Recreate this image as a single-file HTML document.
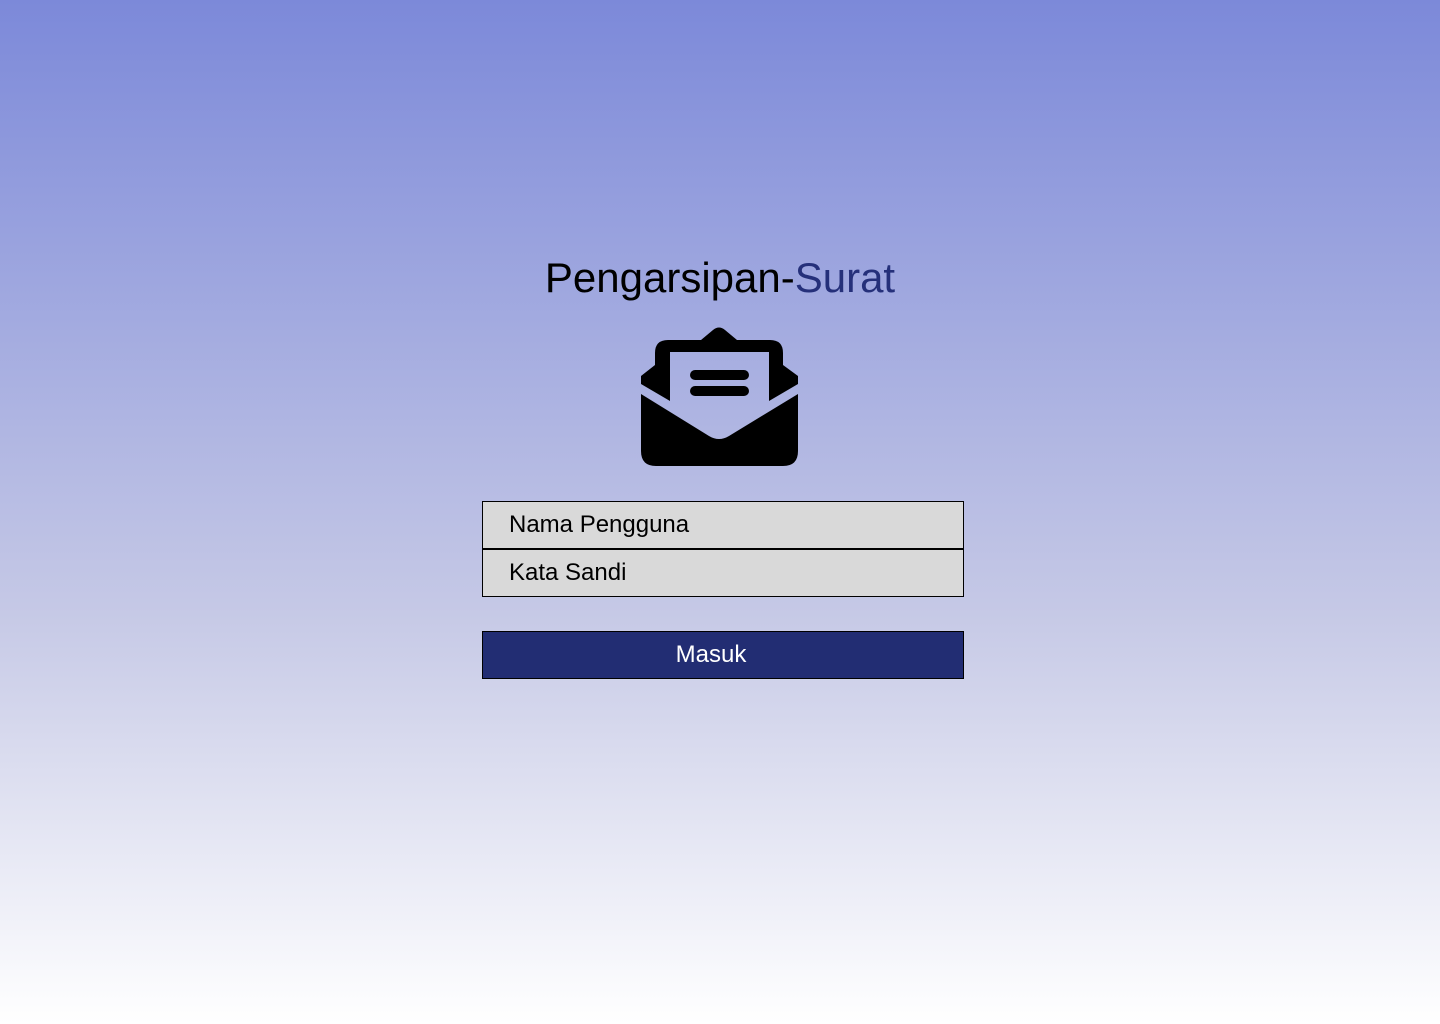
<!DOCTYPE html>
<html><head><style>
body{margin:0;width:1440px;height:1024px;background:linear-gradient(#7c89d9,#c6c9e6 60%,#ffffff);font-family:"Liberation Sans",sans-serif;position:relative;overflow:hidden}
.t{position:absolute;top:254px;left:0;width:1440px;text-align:center;font-size:42px;color:#000;margin-left:0px}
.f{position:absolute;left:482px;width:480px;height:46px;border:1px solid #000;background:#d9d9d9;font-size:24px;line-height:46px;box-sizing:content-box}
.f span{padding-left:26px}
.b{position:absolute;left:482px;top:631px;width:480px;height:46px;border:1px solid #000;background:#222d73;color:#fff;font-size:24px;line-height:46px;text-align:center}
.b span{position:relative;left:-12px}
</style></head><body>
<div class="t">Pengarsipan-<span style="color:#25307a">Surat</span></div>
<svg style="position:absolute;left:0;top:0" width="1440" height="1024">
<path d="M641,376 L655,365 L655,353 Q655,340 668,340 L701,340 L713,330 Q719,325 725,330 L737,340 L770,340 Q783,340 783,353 L783,365 L798,376 L798,384 L769,401 L769,352 L670,352 L670,401 L641,384 Z"/>
<path d="M641,394 L709,436 Q719,442 729,436 L798,394 L798,451 Q798,466 783,466 L656,466 Q641,466 641,451 Z"/>
<rect x="690" y="370" width="59" height="10" rx="5"/>
<rect x="690" y="386" width="59" height="10" rx="5"/>
</svg>
<div class="f" style="top:501px"><span>Nama Pengguna</span></div>
<div class="f" style="top:549px"><span>Kata Sandi</span></div>
<div class="b"><span>Masuk</span></div>
</body></html>
